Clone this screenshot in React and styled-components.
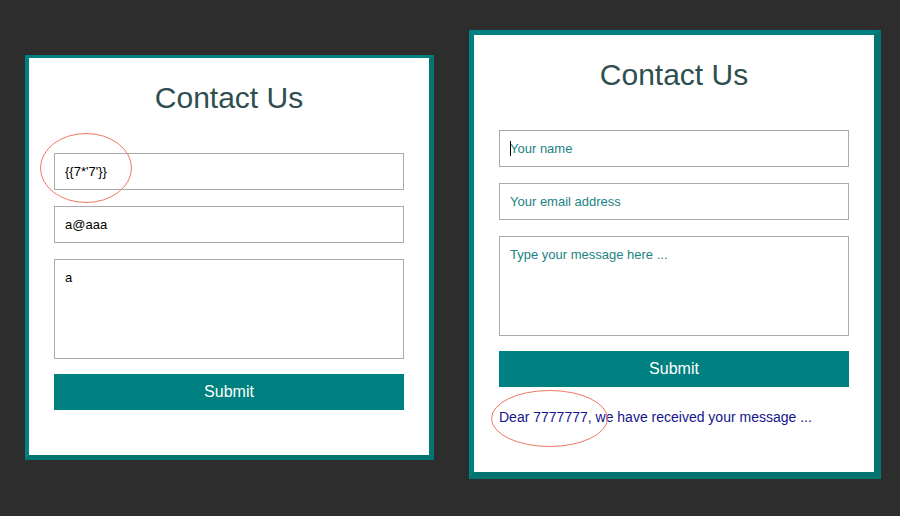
import styled, { createGlobalStyle } from "styled-components";

const GlobalStyle = createGlobalStyle`
  html, body {
    margin: 0;
    padding: 0;
    background-color: #2d2d2d;
  }
  * {
    box-sizing: border-box;
  }
`;

const Page = styled.div`
  width: 900px;
  height: 516px;
  display: flex;
  align-items: flex-start;
  gap: 35px;
  padding: 30px 0 0 25px;
  font-family: "Liberation Sans", Arial, sans-serif;
`;

const Card = styled.div`
  position: relative;
  width: ${(props) => (props.$wide ? "412px" : "409px")};
  margin-top: ${(props) => props.$offset || 0}px;
  background-color: #fff;
  border-style: solid;
  border-color: #008080 #037470 #037470 #008080;
  border-width: ${(props) =>
    props.$wide ? "5px 7px 7px 5px" : "3px 5px 5px 4px"};
  padding: 0 25px 45px;
`;

const Title = styled.h2`
  margin: 23px 0 38px;
  font-size: 30px;
  line-height: 34px;
  font-weight: 400;
  color: #2f4f4f;
  text-align: center;
`;

const Form = styled.div`
  display: flex;
  flex-direction: column;
  gap: 16px;
`;

const Field = styled.div`
  position: relative;
`;

const Input = styled.input`
  display: block;
  width: 100%;
  height: 37px;
  border: 1px solid #aaa;
  padding: 0 10px;
  font-family: inherit;
  font-size: 13px;
  color: #000;
  background: #fff;
  outline: none;
  &::placeholder {
    color: #1a8383;
    opacity: 1;
  }
`;

const TextArea = styled.textarea`
  display: block;
  width: 100%;
  height: 100px;
  border: 1px solid #aaa;
  padding: 10px;
  font-family: inherit;
  font-size: 13px;
  color: #000;
  resize: none;
  outline: none;
  &::placeholder {
    color: #1a8383;
    opacity: 1;
  }
`;

const Button = styled.button`
  display: block;
  width: 100%;
  height: 36px;
  margin-top: -1px;
  border: none;
  background-color: #008080;
  color: #fff;
  font-family: inherit;
  font-size: 16px;
`;

const Caret = styled.span`
  position: absolute;
  left: 11px;
  top: 11px;
  width: 1px;
  height: 15px;
  background-color: #000;
`;

const Message = styled.p`
  margin: 22px 0 2px;
  font-size: 14px;
  line-height: 16px;
  color: #14148c;
`;

// 빨간 동그라미 표시 (스크린샷 위 주석)
const Mark = styled.svg`
  position: absolute;
  left: ${(props) => props.$x}px;
  top: ${(props) => props.$y}px;
  overflow: visible;
  pointer-events: none;
`;

const Ellipse = ({ x, y, w, h }) => (
  <Mark $x={x} $y={y} width={w} height={h} viewBox={`0 0 ${w} ${h}`}>
    <ellipse
      cx={w / 2}
      cy={h / 2}
      rx={w / 2 - 0.5}
      ry={h / 2 - 0.5}
      fill="none"
      stroke="#ec7a62"
      strokeWidth="1"
    />
  </Mark>
);

const App = () => {
  return (
    <>
      <GlobalStyle />
      <Page>
        {/* 왼쪽: 입력한 상태 */}
        <Card $offset={25}>
          <Title>Contact Us</Title>
          <Form>
            <Input defaultValue="{{7*'7'}}" />
            <Input defaultValue="a@aaa" />
            <TextArea defaultValue="a" />
            <Button>Submit</Button>
          </Form>
          <Ellipse x={11} y={75} w={92} h={70} />
        </Card>

        {/* 오른쪽: 제출 후 결과 */}
        <Card $wide>
          <Title>Contact Us</Title>
          <Form>
            <Field>
              <Input placeholder="Your name" />
              <Caret />
            </Field>
            <Input placeholder="Your email address" />
            <TextArea placeholder="Type your message here ..." />
            <Button>Submit</Button>
          </Form>
          <Message>Dear 7777777, we have received your message ...</Message>
          <Ellipse x={17} y={355} w={117} h={57} />
        </Card>
      </Page>
    </>
  );
};

export default App;
